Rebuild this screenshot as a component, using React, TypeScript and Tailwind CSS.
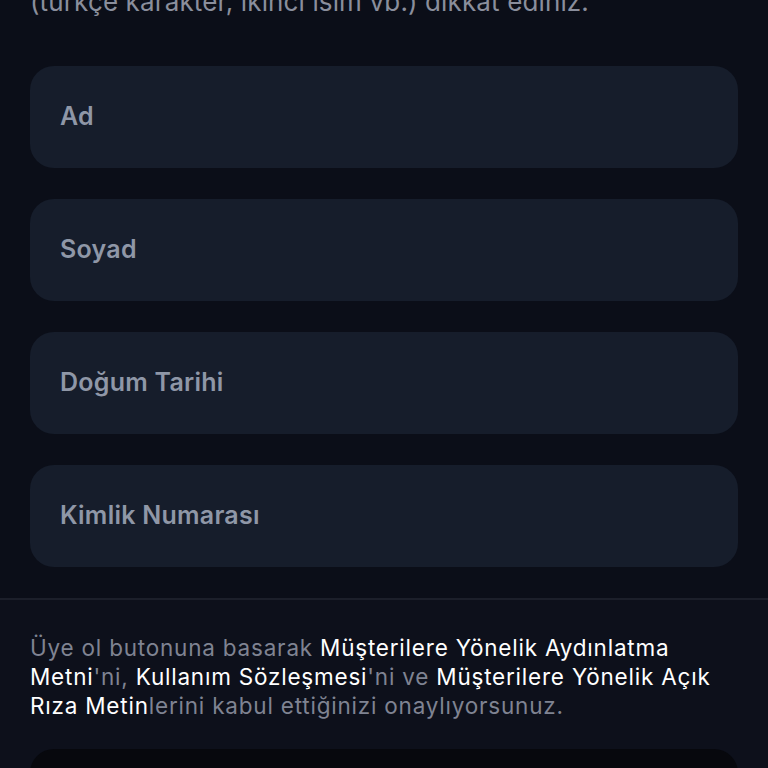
export default function App() {
  const fields = ["Ad", "Soyad", "Doğum Tarihi", "Kimlik Numarası"];
  return (
    <div className="h-[768px] w-[768px] overflow-hidden bg-[#0b0e18]" style={{ fontFamily: "Inter, 'Noto Sans', sans-serif" }}>
      <div className="px-[30px]">
        <p className="-mt-[15px] text-[26px] leading-[34px] tracking-[0.005em] text-[#8a8e9c]">
          (türkçe karakter, ikinci isim vb.) dikkat ediniz.
        </p>
        <div className="mt-[47px] flex flex-col gap-[31px]">
          {fields.map((f) => (
            <div key={f} className="flex h-[102px] items-center rounded-[24px] bg-[#161d2b] px-[30px]">
              <span className="text-[25px] font-semibold tracking-[0.01em] text-[#8f97a7]">{f}</span>
            </div>
          ))}
        </div>
      </div>
      <div className="mt-[31px] h-[2px] bg-[#1c1f2a]" />
      <div className="bg-[#0d101b] px-[30px] pt-[33px]">
        <p className="text-[22.5px] leading-[29px] tracking-[0.035em] text-[#7f8392]">
          Üye ol butonuna basarak <span className="text-white">Müşterilere Yönelik Aydınlatma Metni</span>'ni,{" "}
          <span className="text-white">Kullanım Sözleşmesi</span>'ni ve{" "}
          <span className="text-white">Müşterilere Yönelik Açık Rıza Metin</span>lerini kabul ettiğinizi onaylıyorsunuz.
        </p>
        <div className="mt-[29px] h-[100px] rounded-[24px] bg-[#07080d]" />
      </div>
    </div>
  );
}
